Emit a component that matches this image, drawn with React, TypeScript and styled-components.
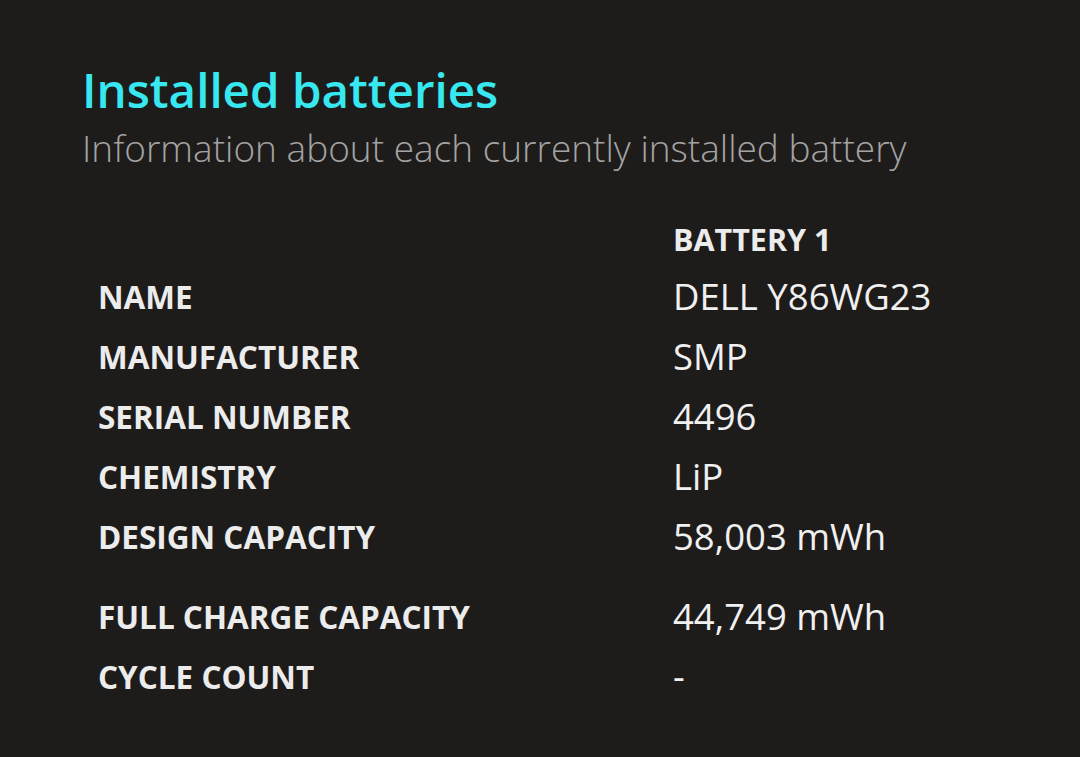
import React from "react";
import styled, { createGlobalStyle } from "styled-components";

const Global = createGlobalStyle`
  html, body { margin: 0; padding: 0; background: #1e1c1b; }
  body { font-family: "Open Sans", "Noto Sans", sans-serif; }
`;

const Page = styled.div`
  width: 1080px;
  height: 757px;
  background: #1e1c1b;
  box-sizing: border-box;
  padding: 62px 0 0 82px;
  overflow: hidden;
`;

const Title = styled.h1`
  margin: 0;
  font-size: 47.5px;
  line-height: 56px;
  font-weight: 600;
  color: #38e8f0;
  white-space: nowrap;
`;

const Subtitle = styled.p`
  margin: 0;
  font-size: 37px;
  line-height: 60px;
  font-weight: 300;
  color: #a3a3a3;
  white-space: nowrap;
`;

const Table = styled.div`
  display: grid;
  grid-template-columns: 575px auto;
  margin: 34px 0 0 16px;
  align-items: center;
`;

const HeadCell = styled.div`
  height: 54px;
  display: flex;
  align-items: center;
  font-size: 30.5px;
  font-weight: 700;
  color: #ececec;
  white-space: nowrap;
`;

const Label = styled.div<{ $gap?: boolean }>`
  height: 60px;
  display: flex;
  align-items: center;
  margin-top: ${(p) => (p.$gap ? "20px" : "0")};
  font-size: 31.5px;
  font-weight: 700;
  color: #ececec;
  white-space: nowrap;
`;

const Value = styled.div<{ $gap?: boolean }>`
  height: 60px;
  display: flex;
  align-items: center;
  margin-top: ${(p) => (p.$gap ? "20px" : "0")};
  font-size: 36.5px;
  font-weight: 400;
  color: #f0f0f0;
  white-space: nowrap;
`;

const rows: { label: string; value: string; gap?: boolean }[] = [
  { label: "NAME", value: "DELL Y86WG23" },
  { label: "MANUFACTURER", value: "SMP" },
  { label: "SERIAL NUMBER", value: "4496" },
  { label: "CHEMISTRY", value: "LiP" },
  { label: "DESIGN CAPACITY", value: "58,003 mWh" },
  { label: "FULL CHARGE CAPACITY", value: "44,749 mWh", gap: true },
  { label: "CYCLE COUNT", value: "-" },
];

export default function App() {
  return (
    <>
      <Global />
      <Page>
        <Title>Installed batteries</Title>
        <Subtitle>Information about each currently installed battery</Subtitle>
        <Table>
          <HeadCell />
          <HeadCell>BATTERY 1</HeadCell>
          {rows.map((r) => (
            <React.Fragment key={r.label}>
              <Label $gap={r.gap}>{r.label}</Label>
              <Value $gap={r.gap}>{r.value}</Value>
            </React.Fragment>
          ))}
        </Table>
      </Page>
    </>
  );
}
